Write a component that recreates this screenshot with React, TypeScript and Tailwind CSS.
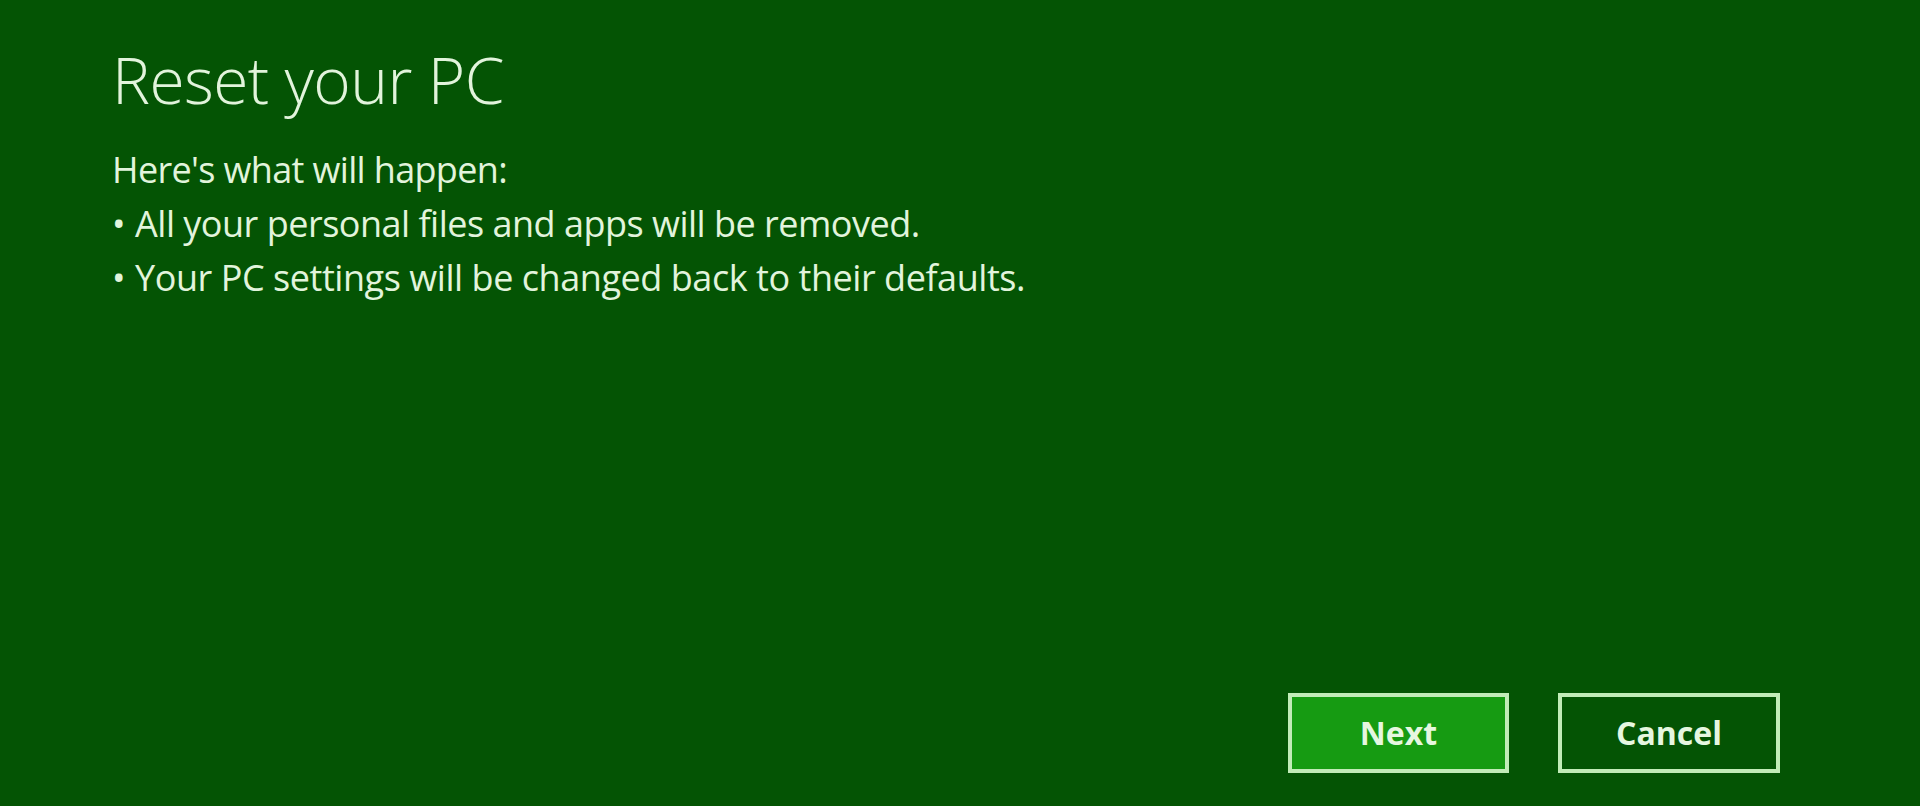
export default function App() {
  return (
    <div
      className="w-[1920px] h-[806px] bg-[#045404] text-[#e2f4dc] flex flex-col overflow-hidden"
      style={{ fontFamily: '"Open Sans", "Noto Sans", sans-serif' }}
    >
      {/* Header + description */}
      <div className="pl-[112px] pt-[35px]">
        <h1 className="text-[64px] font-light leading-[90px] tracking-[-0.6px]">Reset your PC</h1>
        <div className="mt-[18px] text-[36px] leading-[54px] tracking-[-0.65px]">
          <p>Here's what will happen:</p>
          <p className="tracking-[-0.5px]">
            <span className="mr-[10px]">•</span>All your personal files and apps will be removed.
          </p>
          <p className="tracking-[-0.45px]">
            <span className="mr-[10px]">•</span>Your PC settings will be changed back to their defaults.
          </p>
        </div>
      </div>

      {/* Actions */}
      <div className="mt-auto mb-[33px] flex justify-end gap-[49px] pr-[140px]">
        <button className="w-[221px] h-[80px] border-[4px] border-[#c2ecb8] bg-[#169b12] text-[32px] font-bold text-[#e6f7e0]">
          Next
        </button>
        <button className="w-[222px] h-[80px] border-[4px] border-[#c2ecb8] bg-[#045404] text-[32px] font-bold text-[#e6f7e0]">
          Cancel
        </button>
      </div>
    </div>
  );
}
